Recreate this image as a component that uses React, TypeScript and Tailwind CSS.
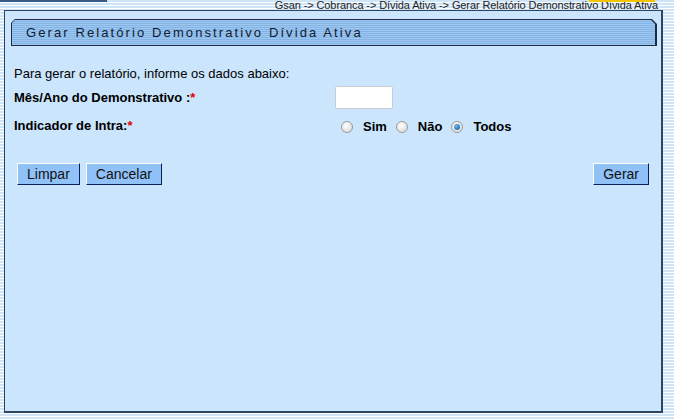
import React from "react";

const stripes = {
  backgroundImage:
    "repeating-linear-gradient(to bottom, #cfe4f6 0px, #cfe4f6 2px, #ffffff 2px, #ffffff 3px)",
};

function Radio({ checked }: { checked?: boolean }) {
  return (
    <span className="inline-flex w-[12px] h-[12px] rounded-full border border-[#9a9a9a] bg-[radial-gradient(circle_at_40%_35%,#ffffff,#d4d4d4)] items-center justify-center">
      {checked && (
        <span className="w-[6px] h-[6px] rounded-full bg-[radial-gradient(circle_at_35%_35%,#6fc0f0,#0a4f8a)]" />
      )}
    </span>
  );
}

function Btn({ children }: { children: React.ReactNode }) {
  return (
    <button className="h-[22px] px-[9px] bg-[#90c2f8] border border-t-white border-l-white border-b-[#0c1f5c] border-r-[#0c1f5c] text-[14px] text-[#111] leading-none">
      {children}
    </button>
  );
}

export default function App() {
  return (
    <div
      className="w-[674px] h-[420px] relative overflow-hidden"
      style={{ ...stripes, fontFamily: '"Liberation Sans", Arial, sans-serif' }}
    >
      <div className="h-[10px] flex items-start relative">
        <div className="absolute left-0 top-0 w-[107px] h-[2px] bg-[#3a5a88]" />
        <div className="absolute left-[589px] top-0 w-[66px] h-[2px] bg-[#f5c400]" />
        <div className="ml-auto mr-[16px] text-[11px] leading-[10px] tracking-[-0.1px] text-[#222] whitespace-nowrap">
          Gsan -&gt; Cobranca -&gt; Dívida Ativa -&gt; Gerar Relatório Demonstrativo Dívida Ativa
        </div>
      </div>
      <div className="ml-[4px] w-[659px] h-[403px] bg-[#cbe5fd] border-[2px] border-t-[1px] border-l-[1px] border-[#2c4563]">
        <div className="pt-[8px] pl-[6px] pr-[4px]">
          <div
            className="h-[27px] bg-[#1c2c44] pr-[2px] pb-[1px] pl-[1px] pt-[1px]"
            style={{
              clipPath:
                "polygon(4px 0, calc(100% - 5px) 0, 100% 5px, 100% 100%, 0 100%, 0 4px)",
            }}
          >
            <div
              className="h-full flex items-center pl-[14px] text-[13px] tracking-[2.1px] text-[#102030]"
              style={{
                clipPath:
                  "polygon(3px 0, calc(100% - 4px) 0, 100% 4px, 100% 100%, 0 100%, 0 3px)",
                backgroundImage:
                  "repeating-linear-gradient(to bottom, #9ec7f0 0px, #9ec7f0 1px, #84b3e6 1px, #84b3e6 2px)",
              }}
            >
              Gerar Relatório Demonstrativo Dívida Ativa
            </div>
          </div>
        </div>
        <div className="pl-[9px] pr-[12px] text-[13px] text-black">
          <div className="mt-[21px] h-[14px] leading-[14px]">
            Para gerar o relatório, informe os dados abaixo:
          </div>
          <div className="mt-[5px] flex items-center h-[23px]">
            <div className="w-[321px] font-bold text-[13px]">
              Mês/Ano do Demonstrativo :<span className="text-[#e00000]">*</span>
            </div>
            <div className="w-[58px] h-[23px] bg-white border border-[#c8cdd4] rounded-[2px]" />
          </div>
          <div className="mt-[6px] flex items-center h-[22px]">
            <div className="w-[327px] font-bold text-[13px]">
              Indicador de Intra:<span className="text-[#e00000]">*</span>
            </div>
            <div className="flex items-center font-bold text-[13px] pt-[1px]">
              <Radio />
              <span className="ml-[10px] mr-[9px]">Sim</span>
              <Radio />
              <span className="ml-[10px] mr-[9px]">Não</span>
              <Radio checked />
              <span className="ml-[10px]">Todos</span>
            </div>
          </div>
          <div className="mt-[26px] flex items-center pl-[3px]">
            <Btn>Limpar</Btn>
            <span className="w-[6px]" />
            <Btn>Cancelar</Btn>
            <span className="ml-auto" />
            <Btn>Gerar</Btn>
          </div>
        </div>
      </div>
    </div>
  );
}
